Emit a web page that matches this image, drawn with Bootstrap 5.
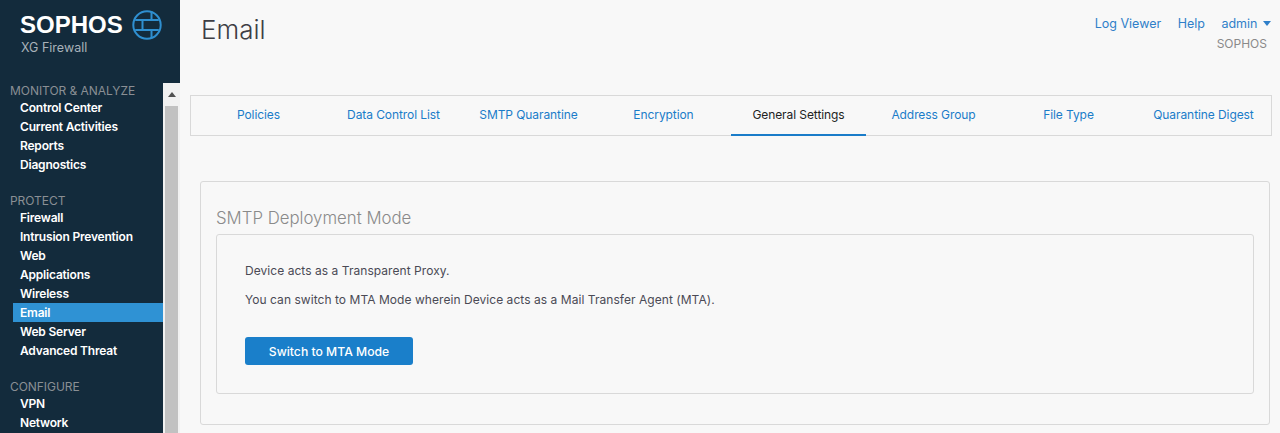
<!DOCTYPE html>
<html lang="en">
<head>
<meta charset="utf-8">
<title>Email</title>
<link href="https://cdn.jsdelivr.net/npm/bootstrap@5.3.0/dist/css/bootstrap.min.css" rel="stylesheet">
<style>
html,body{height:433px;overflow:hidden}
body{background:#f8f8f8;font-family:"Inter","Liberation Sans",sans-serif;font-size:12px;color:#4a4a55}
.shell{height:433px;width:1280px}
.side{width:180px;background:#132b3c;height:433px;flex:none;overflow:hidden}
.brand{height:83px;padding:10px 0 0 20px}
.brandhead{height:30px;gap:10px}
.brandword{font-family:"Liberation Sans",sans-serif;font-weight:700;font-size:24px;line-height:30px;color:#fff;width:102px;white-space:nowrap}
.brandsub{font-size:12.5px;line-height:16px;color:#a9b2b9;padding-left:1px}
.sidebody{height:350px}
.menu{width:163px;flex:none}
.menuhead{padding-left:10px;font-size:12px;line-height:15px;color:#8a8f94;letter-spacing:-.05px}
.menuitem{display:block;margin-left:13px;padding-left:7px;height:19px;line-height:19px;font-weight:600;font-size:12px;letter-spacing:-.2px;color:#fff;text-decoration:none}
.menuitem.on{background:#2f92d4}
.group{margin-bottom:19px}
.scroller{width:17px;background:#f1f1f1}
.scrollbtn{height:23px}
.scrollbtn i{border:4px solid transparent;border-bottom:5px solid #505050;border-top:0;display:block}
.thumb{width:13px;margin:0 auto;background:#c1c1c1;flex:1}
.pagehead{height:95px;padding:13px 13px 0 21px}
.ttl{font-size:26px;line-height:34px;color:#3d3d44;font-weight:300;margin:0}
.toplinkrow{gap:16.5px;margin-top:2px;margin-right:-4px}
.toplinks a{color:#2f7fc9;text-decoration:none;font-size:12.5px;line-height:18px}
.caret{display:inline-block;border:4px solid transparent;border-top:5px solid #2f7fc9;border-bottom:0;vertical-align:2px;margin-left:2px}
.org{color:#8a8a8a;font-size:12px;line-height:16px;margin-top:3px}
.tabsbar{margin-left:10px;width:1082px;height:41px;border:1px solid #d9d9d9}
.tabitem{flex:1 1 0;text-align:center;line-height:37px;height:40px;color:#1a7cc9;font-size:12px;letter-spacing:-.08px;text-decoration:none;white-space:nowrap}
.tabitem.on{color:#222;border-bottom:2px solid #1a7cc9}
.outerbox{margin:45px 6px 0 20px;width:1070px;height:244px;border:1px solid #d9d9d9;border-radius:3px;padding:25px 15px 0}
.boxttl{font-size:16.8px;line-height:22px;color:#8a8a8a;font-weight:300;margin:0 0 5px}
.innerbox{height:160px;border:1px solid #d9d9d9;border-radius:3px;padding:27px 28px}
.innerbox p{margin:0 0 11px;line-height:18px;font-size:12px;letter-spacing:.05px}
.switchbtn{background:#1a7fca;border:0;color:#fff;width:168px;height:28px;font-size:12.2px;font-weight:500;padding:2px 0 0;margin-top:17px;border-radius:3px}
</style>
</head>
<body>
<div class="shell d-flex">
  <aside class="side">
    <div class="brand">
      <div class="brandhead d-flex align-items-center">
        <span class="brandword">SOPHOS</span>
        <svg width="30" height="30" viewBox="0 0 30 30" fill="none" stroke="#2f8fd0" stroke-width="2"><circle cx="15" cy="15" r="13.7"/><path d="M3.2 10H26.8M3.2 20H26.8M19.5 1.8V10M10.5 10V20M19.5 20V28.2"/></svg>
      </div>
      <div class="brandsub">XG Firewall</div>
    </div>
    <div class="sidebody d-flex">
      <nav class="menu">
        <div class="group"><div class="menuhead">MONITOR &amp; ANALYZE</div>
          <a class="menuitem" href="#">Control Center</a><a class="menuitem" href="#">Current Activities</a><a class="menuitem" href="#">Reports</a><a class="menuitem" href="#">Diagnostics</a></div>
        <div class="group"><div class="menuhead">PROTECT</div>
          <a class="menuitem" href="#">Firewall</a><a class="menuitem" href="#">Intrusion Prevention</a><a class="menuitem" href="#">Web</a><a class="menuitem" href="#">Applications</a><a class="menuitem" href="#">Wireless</a><a class="menuitem on" href="#">Email</a><a class="menuitem" href="#">Web Server</a><a class="menuitem" href="#">Advanced Threat</a></div>
        <div class="group"><div class="menuhead">CONFIGURE</div>
          <a class="menuitem" href="#">VPN</a><a class="menuitem" href="#">Network</a></div>
      </nav>
      <div class="scroller d-flex flex-column">
        <div class="scrollbtn d-flex align-items-center justify-content-center"><i></i></div>
        <div class="thumb"></div>
      </div>
    </div>
  </aside>
  <main class="flex-grow-1">
    <div class="pagehead d-flex justify-content-between">
      <h1 class="ttl">Email</h1>
      <div class="toplinks text-end">
        <div class="toplinkrow d-flex"><a href="#">Log Viewer</a><a href="#">Help</a><a href="#">admin <span class="caret"></span></a></div>
        <div class="org">SOPHOS</div>
      </div>
    </div>
    <div class="tabsbar d-flex">
      <a class="tabitem" href="#">Policies</a><a class="tabitem" href="#">Data Control List</a><a class="tabitem" href="#">SMTP Quarantine</a><a class="tabitem" href="#">Encryption</a><a class="tabitem on" href="#">General Settings</a><a class="tabitem" href="#">Address Group</a><a class="tabitem" href="#">File Type</a><a class="tabitem" href="#">Quarantine Digest</a>
    </div>
    <section class="outerbox">
      <h2 class="boxttl">SMTP Deployment Mode</h2>
      <div class="innerbox">
        <p>Device acts as a Transparent Proxy.</p>
        <p>You can switch to MTA Mode wherein Device acts as a Mail Transfer Agent (MTA).</p>
        <button class="btn switchbtn" type="button">Switch to MTA Mode</button>
      </div>
    </section>
  </main>
</div>
<script src="https://cdn.jsdelivr.net/npm/bootstrap@5.3.0/dist/js/bootstrap.bundle.min.js"></script>
</body>
</html>
